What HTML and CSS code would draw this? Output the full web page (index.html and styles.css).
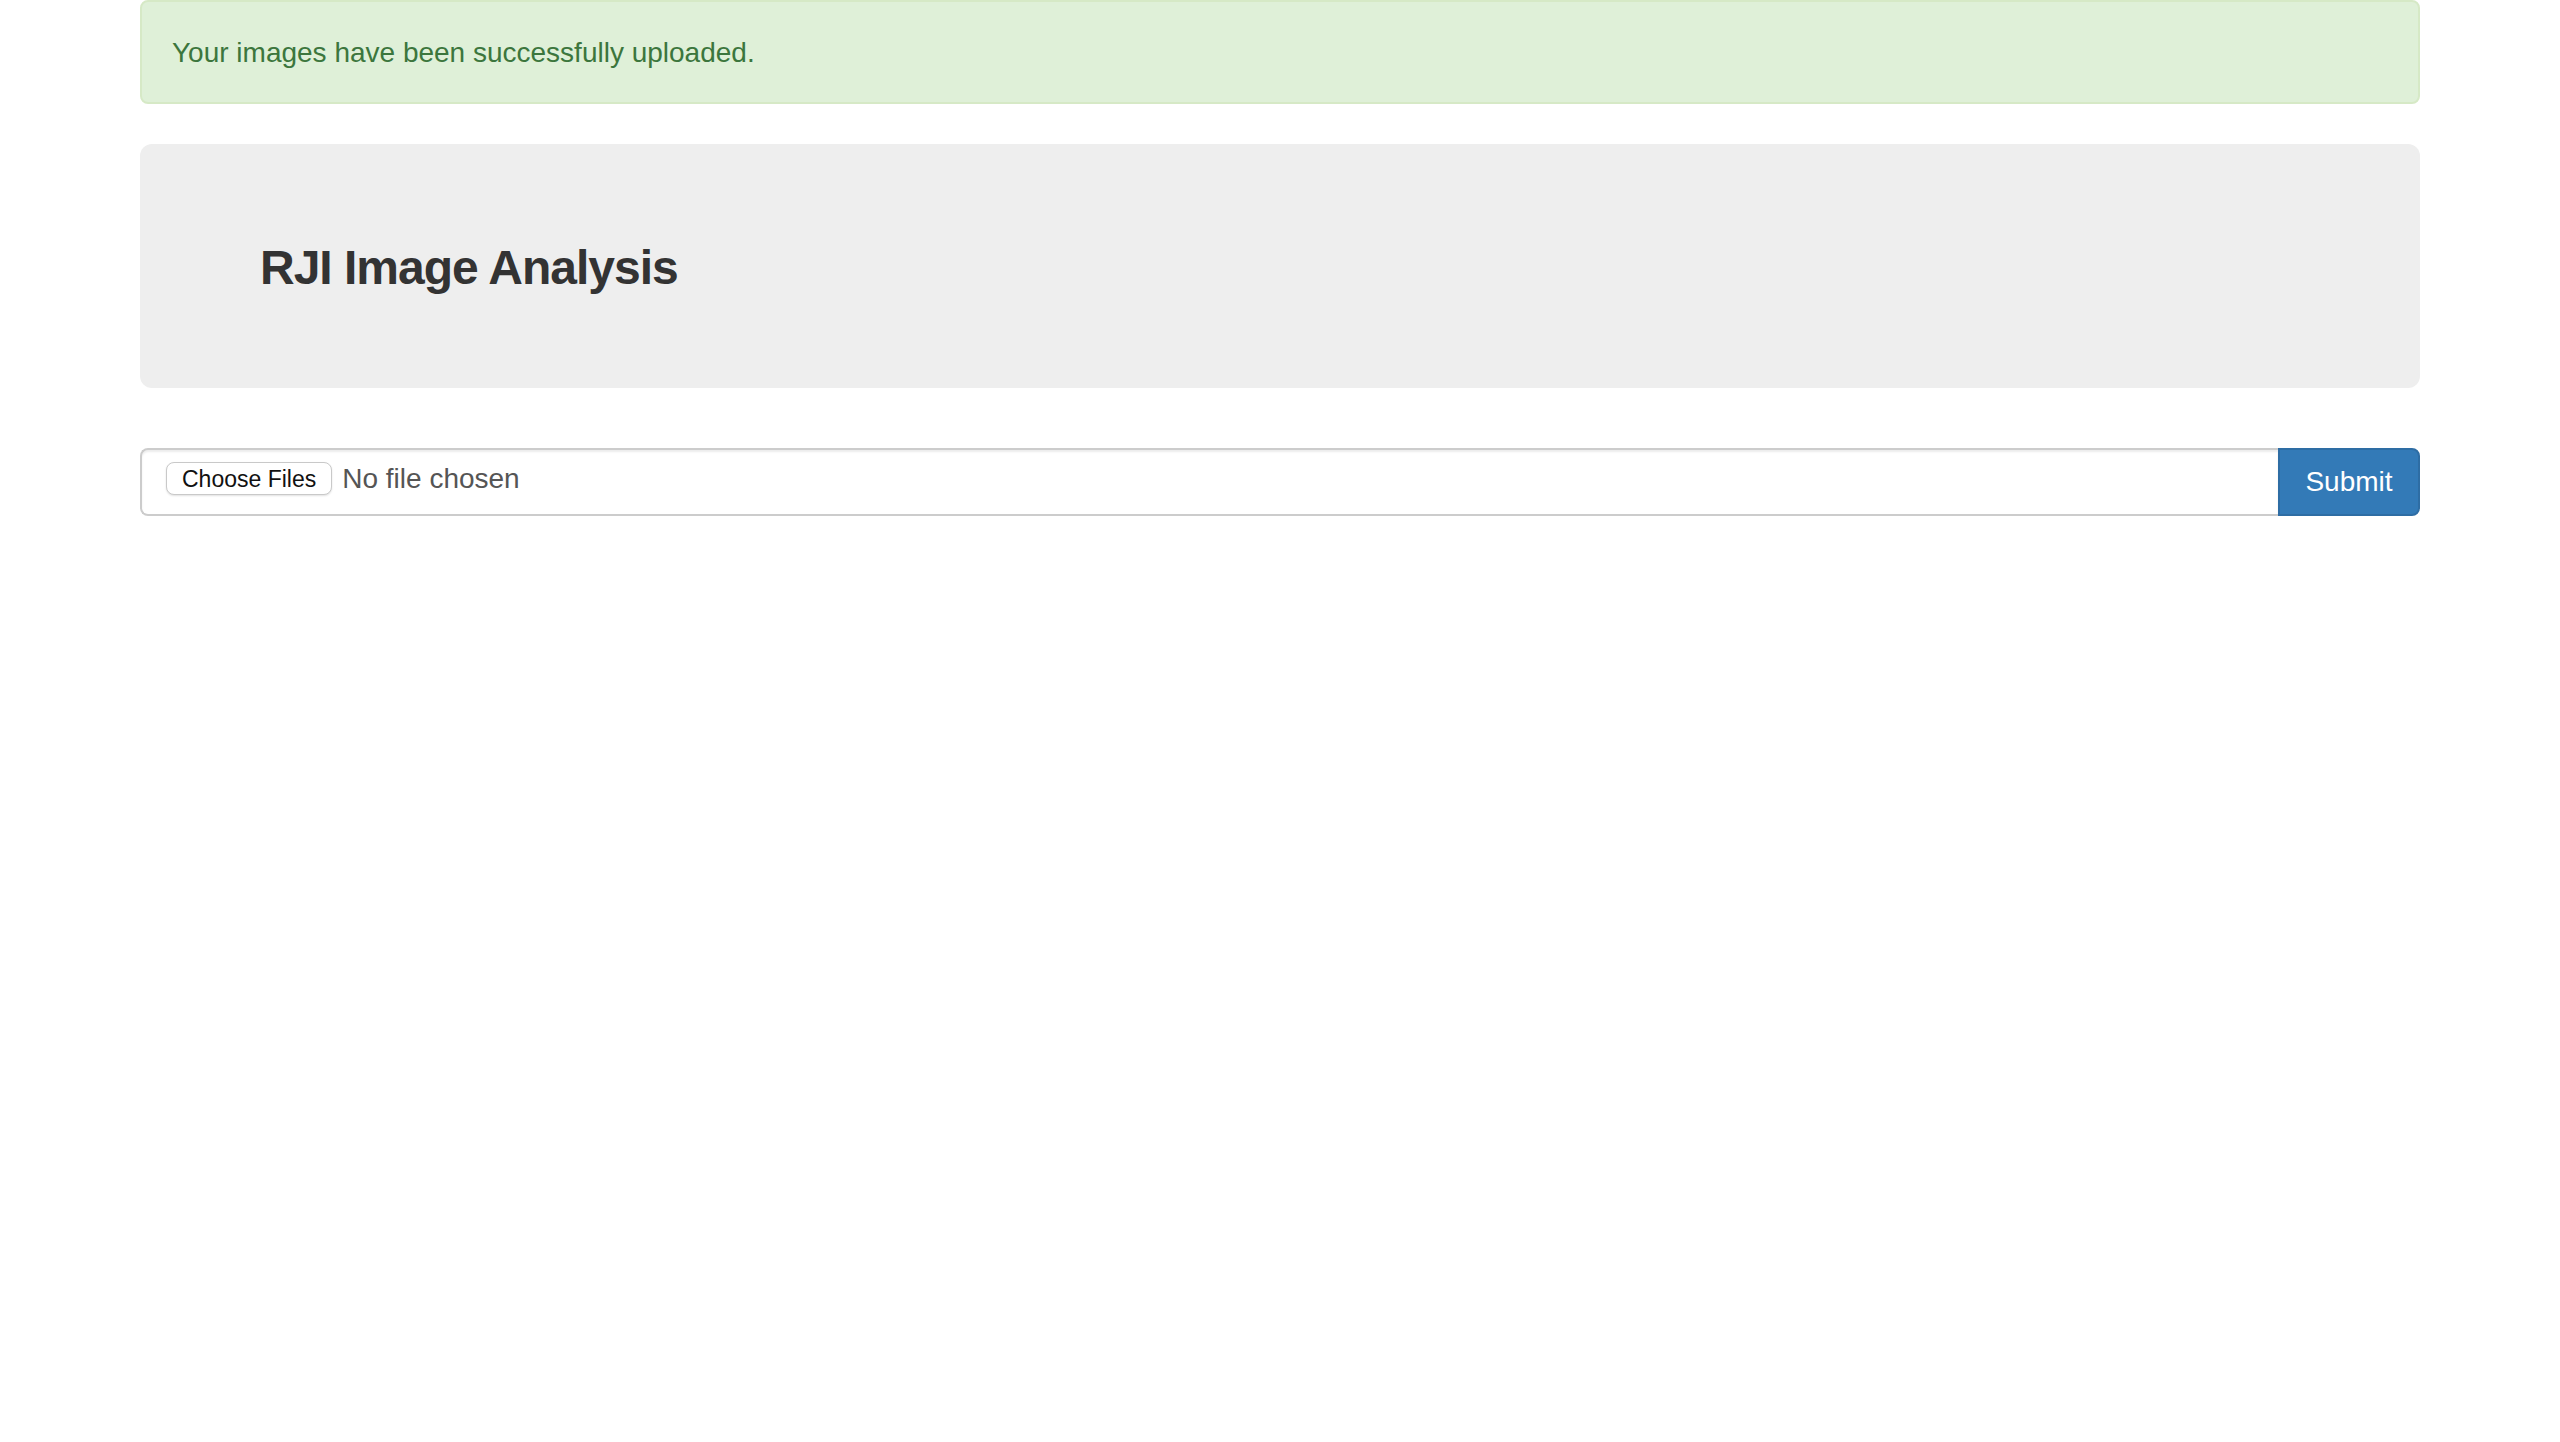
FILE: index.html
```html
<!DOCTYPE html>
<html lang="en">
<head>
<meta charset="utf-8">
<title>RJI Image Analysis</title>
<link rel="stylesheet" href="styles.css">
</head>
<body>
<div class="container">
  <div class="alert alert-success">Your images have been successfully uploaded.</div>
  <div class="jumbotron">
    <h3 class="title">RJI Image Analysis</h3>
  </div>
  <form class="upload-form">
    <div class="input-group">
      <label class="file-field">
        <span class="choose-btn">Choose Files</span>
        <span class="no-file">No file chosen</span>
      </label>
      <button type="button" class="btn-primary">Submit</button>
    </div>
  </form>
</div>
</body>
</html>
```

FILE: styles.css
```css
* {
  box-sizing: border-box;
}

html, body {
  margin: 0;
  padding: 0;
  background: #ffffff;
}

body {
  font-family: "Liberation Sans", Arial, Helvetica, sans-serif;
  font-size: 28px;
  line-height: 40px;
  color: #333333;
}

.container {
  width: 2340px;
  margin: 0 auto;
  padding: 0 30px;
}

.alert {
  padding: 31px 30px 29px;
  border: 2px solid transparent;
  border-radius: 8px;
  margin-bottom: 40px;
}

.alert-success {
  background: #dff0d8;
  border-color: #d6e9c6;
  color: #3c763d;
}

.jumbotron {
  background: #eeeeee;
  border-radius: 12px;
  padding: 98px 120px 94px;
  margin-bottom: 60px;
}

.title {
  margin: 0;
  font-size: 48px;
  line-height: 52px;
  font-weight: bold;
  letter-spacing: -1px;
  color: #333333;
}

.upload-form {
  margin: 0;
}

.input-group {
  display: flex;
  height: 68px;
}

.file-field {
  flex: 1;
  display: flex;
  align-items: flex-start;
  gap: 10px;
  height: 68px;
  padding: 12px 24px;
  border: 2px solid #cccccc;
  border-right: none;
  border-radius: 8px 0 0 8px;
  background: #ffffff;
  box-shadow: inset 0 2px 2px rgba(0, 0, 0, 0.075);
}

.choose-btn {
  display: inline-block;
  height: 33px;
  padding: 2px 15px 0;
  font-size: 23px;
  line-height: 29px;
  color: #111111;
  background: #ffffff;
  border: 1px solid #c9c9c9;
  border-radius: 8px;
  box-shadow: 0 1px 2px rgba(0, 0, 0, 0.12);
}

.no-file {
  font-size: 28px;
  line-height: 34px;
  color: #555555;
}

.btn-primary {
  width: 142px;
  height: 68px;
  padding: 12px 24px;
  font-family: "Liberation Sans", Arial, Helvetica, sans-serif;
  font-size: 28px;
  line-height: 40px;
  color: #ffffff;
  background: #337ab7;
  border: 2px solid #2e6da4;
  border-radius: 0 8px 8px 0;
  cursor: pointer;
}
```
